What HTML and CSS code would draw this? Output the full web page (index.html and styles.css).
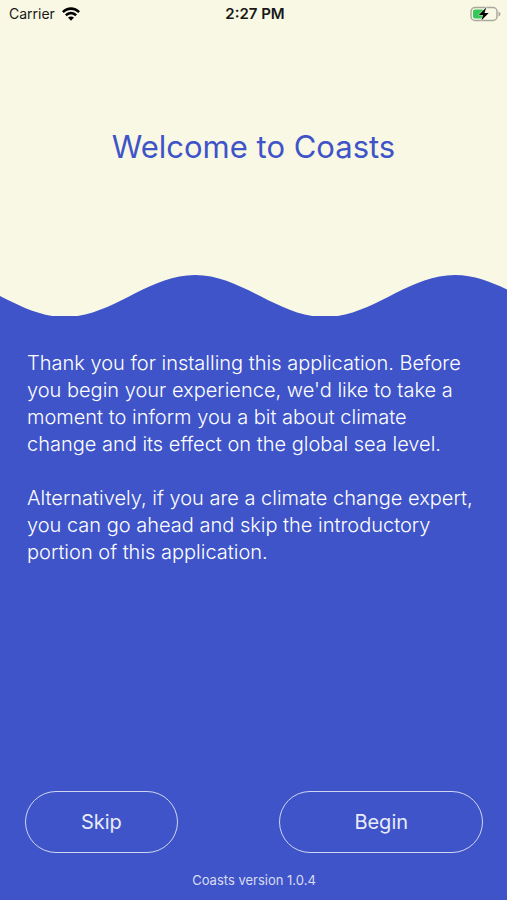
FILE: index.html
```html
<!DOCTYPE html>
<html lang="en">
<head>
  <meta charset="utf-8">
  <meta name="viewport" content="width=device-width, initial-scale=1">
  <title>Welcome to Coasts</title>
  <link rel="stylesheet" href="styles.css">
</head>
<body>
  <div class="status">
    <div class="carrier">
      <span>Carrier</span>
      <svg class="wifi" viewBox="0 0 18 14" aria-hidden="true">
        <path d="M0 4.2C5-1.1 13-1.1 18 4.2L16.2 6.1C12.2 2 5.800 2 1.800 6.100Z"/>
        <path d="M3 7.400C6.400 4 11.600 4 15 7.400L13.200 9.300C10.700 7 7.300 7 4.800 9.300Z"/>
        <path d="M6 10.600C7.700 9 10.300 9 12 10.600L9 13.700Z"/>
      </svg>
    </div>
    <div class="time">2:27 PM</div>
    <svg class="battery" viewBox="0 0 31 16" aria-hidden="true">
      <rect class="shell" x="1" y="1.500" width="26" height="13" rx="4"/>
      <path class="nub" d="M28.500 5.500Q30.500 6 30.500 8T28.500 10.500Z"/>
      <rect class="charge" x="3" y="3.500" width="11" height="9" rx="2"/>
      <path class="bolt" d="M16.200 1.500L8.800 8.900H13L11.300 14.500L18.700 7H14.500Z"/>
    </svg>
  </div>
  <header class="hero">
    <h1>Welcome to Coasts</h1>
  </header>
  <svg class="wave" viewBox="0 0 507 41" preserveAspectRatio="none" aria-hidden="true">
    <path d="M-65 0C-18 0 18 42 65 42S148 0 195 0S278 42 325 42S408 0 455 0S538 42 585 42H-65Z"/>
  </svg>
  <main class="content">
    <div class="intro">
      <p>Thank you for installing this application. Before you begin your experience, we'd like to take a moment to inform you a bit about climate change and its effect on the global sea level.</p>
      <p>Alternatively, if you are a climate change expert, you can go ahead and skip the introductory portion of this application.</p>
    </div>
    <div class="actions">
      <button class="pill" type="button">Skip</button>
      <button class="pill begin" type="button">Begin</button>
    </div>
    <footer class="version">Coasts version 1.0.4</footer>
  </main>
</body>
</html>
```
FILE: styles.css
```css
* {
  box-sizing: border-box;
}

body {
  --sea: #3e54c8;
  --sand: #f9f8e4;
  --foam: #e9ebf9;
  display: flex;
  flex-direction: column;
  min-height: 100vh;
  margin: 0;
  background: var(--sand);
  color: var(--foam);
  font-family: Inter, "Liberation Sans", sans-serif;
}

.status {
  display: grid;
  grid-template-columns: 1fr auto 1fr;
  align-items: center;
  height: 27px;
  padding: 0 6px 0 9px;
  color: #181818;
  font-size: 14px;
}

.carrier {
  display: flex;
  align-items: center;
  gap: 7px;
}

.wifi {
  width: 18px;
  height: 14px;
  fill: #000;
}

.time {
  font-size: 15px;
  font-weight: 600;
}

.battery {
  justify-self: end;
  width: 31px;
  height: 16px;
}

.shell {
  fill: none;
  stroke: #aaa99d;
  stroke-width: 1.5;
}

.nub {
  fill: #aaa99d;
}

.charge {
  fill: #35c759;
}

.bolt {
  fill: #000;
  stroke: var(--sand);
  stroke-width: 1;
  paint-order: stroke;
}

.hero {
  display: flex;
  justify-content: center;
  height: 248px;
  padding-top: 100px;
}

h1 {
  margin: 0;
  color: var(--sea);
  font-size: 31px;
  font-weight: 400;
  line-height: 40px;
}

.wave {
  display: block;
  flex: none;
  width: 100%;
  height: 41px;
  fill: var(--sea);
}

.content {
  display: flex;
  flex: 1;
  flex-direction: column;
  padding: 34px 24px 12px 25px;
  background: var(--sea);
}

.intro {
  flex: 1;
  padding: 0 2px;
  color: #fff;
  font-size: 20px;
  font-weight: 300;
  line-height: 27px;
}

.intro p {
  margin: 0 0 27px;
}

.actions {
  display: grid;
  grid-template-columns: 3fr 2fr 4fr;
}

.pill {
  height: 62px;
  padding: 0;
  border: 1px solid #d0d6f2;
  border-radius: 31px;
  background: transparent;
  color: var(--foam);
  font: 400 20px/24px Inter, "Liberation Sans", sans-serif;
}

.begin {
  grid-column: 3;
}

.version {
  margin-top: 19px;
  color: #d8dcf4;
  font-size: 13px;
  line-height: 16px;
  text-align: center;
}
```
